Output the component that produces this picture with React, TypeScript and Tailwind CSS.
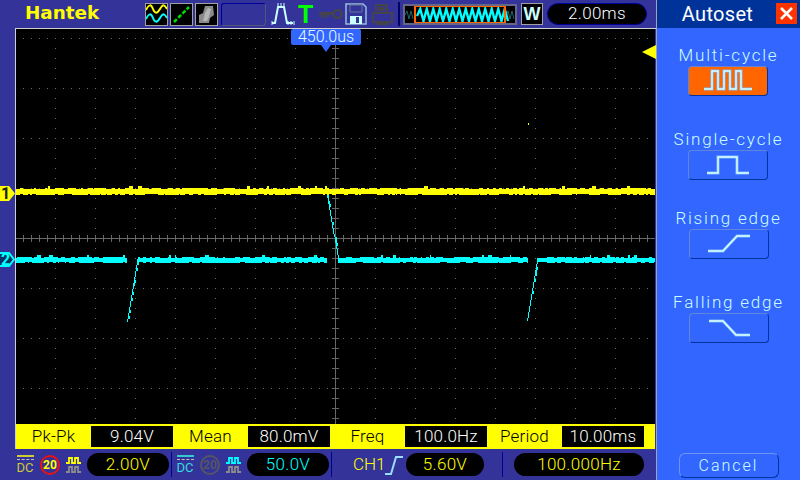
import React from 'react'

const font = { fontFamily: 'Roboto, "Liberation Sans", Arial, sans-serif' }

// small seeded random so the trace noise stays the same between runs
function makeRand(seed: number) {
  let s = seed
  return () => {
    s = (s * 16807) % 2147483647
    return s / 2147483647
  }
}

function Band({ prefix, color, top, bottom, spike, gaps, seed }: { prefix: string; color: string; top: number; bottom: number; spike: number; gaps: number[][]; seed: number }) {
  const rand = makeRand(seed)
  const rects: React.ReactNode[] = []
  let x = 0
  while (x < 639) {
    const w = 1 + Math.floor(rand() * 4)
    const a = rand()
    const b = rand()
    const t = a < 0.06 ? top - spike : a < 0.6 ? top : top + 1
    const h = (b < 0.3 ? bottom - 1 : bottom) - t
    for (let i = x; i < x + w && i < 639; i++) {
      const px = i + 16
      if (gaps.some(g => px >= g[0] && px < g[1])) continue
      rects.push(<rect key={prefix + i} x={i} y={t} width={1} height={h} fill={color} />)
    }
    x += w
  }
  return <g shapeRendering="crispEdges">{rects}</g>
}

// stepped near-vertical edge, page coords, y1 above y2
function Edge({ x1, y1, x2, y2, seed }: { x1: number; y1: number; x2: number; y2: number; seed: number }) {
  const rand = makeRand(seed)
  const rects: React.ReactNode[] = []
  for (let y = y1; y < y2; y += 3) {
    const x = Math.round(x1 + ((x2 - x1) * (y - y1)) / (y2 - y1))
    rects.push(<rect key={y} x={x - 16} y={y - 29} width={rand() < 0.35 ? 2 : 1} height={3} fill="#00ffff" />)
  }
  return <g shapeRendering="crispEdges">{rects}</g>
}

function Grid() {
  const dots: React.ReactNode[] = []
  const rows = [9, 59, 109, 159, 209, 259, 309, 359]
  for (const y of rows) {
    for (let x = 7; x < 639; x += 8) {
      dots.push(<rect key={'h' + y + '-' + x} x={x} y={y} width={1} height={1} fill="#6a6a6a" />)
    }
  }
  for (let x = 39; x < 639; x += 40) {
    for (let y = 19; y < 395; y += 10) {
      dots.push(<rect key={'v' + x + '-' + y} x={x} y={y} width={1} height={1} fill="#6a6a6a" />)
    }
  }
  const ticksH: React.ReactNode[] = []
  for (let x = 0; x < 639; x += 8) {
    ticksH.push(<rect key={'th' + x} x={x + 7} y={206} width={1} height={7} fill="#666" />)
  }
  const ticksV: React.ReactNode[] = []
  for (let y = 0; y < 395; y += 10) {
    ticksV.push(<rect key={'tv' + y} x={316} y={y + 9} width={7} height={1} fill="#666" />)
  }
  return (
    <g shapeRendering="crispEdges">
      {dots}
      <rect x={0} y={209} width={639} height={1} fill="#666" />
      <rect x={319} y={0} width={1} height={395} fill="#666" />
      {ticksH}
      {ticksV}
    </g>
  )
}

function Scope() {
  return (
    <svg width={639} height={395} className="block bg-black">
      <Grid />
      <Band prefix="y" color="#ffff00" top={159} bottom={166} spike={2} gaps={[]} seed={4711} />
      <Band prefix="c" color="#00ffff" top={228} bottom={234} spike={2} gaps={[[127, 138], [327, 338], [528, 538]]} seed={911} />
      <Edge x1={137} y1={259} x2={127} y2={322} seed={31} />
      <Edge x1={327} y1={195} x2={338} y2={256} seed={57} />
      <Edge x1={537} y1={258} x2={527} y2={320} seed={83} />
      <rect x={512} y={94} width={1} height={2} fill="#ffff00" />
    </svg>
  )
}

function IconBox({ children }: { children: React.ReactNode }) {
  return <div className="w-[23px] h-[23px] bg-black border border-[#a0a0a0] shrink-0">{children}</div>
}

function PanelBtn({ label, active, mt, children }: { label: string; active?: boolean; mt: string; children: React.ReactNode }) {
  return (
    <div className={'flex flex-col items-center ' + mt}>
      <div className="text-[17px] leading-[18px] font-light tracking-[1.8px] text-[#ccffff] whitespace-nowrap">{label}</div>
      <div
        className={
          'mt-[2px] w-[80px] h-[30px] rounded-[4px] border border-t-[#5f86d8] border-l-[#5f86d8] border-r-[#0033a0] border-b-[#0033a0] flex items-center justify-center ' +
          (active ? 'bg-[#ff6600]' : 'bg-[#3366ff]')
        }
      >
        {children}
      </div>
    </div>
  )
}

function Wave({ d }: { d: string }) {
  return (
    <svg width={50} height={24} fill="none">
      <path d={d} stroke="#77bbff" strokeWidth={3} />
      <path d={d} stroke="#e0ffff" strokeWidth={1.4} />
    </svg>
  )
}

function Pill({ w, color, children }: { w: string; color: string; children: React.ReactNode }) {
  return (
    <div className={w + ' h-[23px] rounded-full bg-black flex items-center justify-center text-[17px] tracking-[0.3px] font-light shrink-0 ' + color}>
      {children}
    </div>
  )
}

function Measure({ label, value }: { label: string; value: string }) {
  return (
    <>
      <div className="w-[75px] text-center text-black text-[17px] tracking-[0.2px] font-light shrink-0">{label}</div>
      <div className="w-[82px] h-[21px] bg-black text-white text-[17px] tracking-[0.2px] font-light flex items-center justify-center shrink-0">{value}</div>
    </>
  )
}

function DcIcon({ color, text }: { color: string; text: string }) {
  return (
    <div className="w-[18px] flex flex-col items-center shrink-0">
      <div className={'w-[17px] h-[2px] ' + color} />
      <div className="w-[17px] h-[3px] mt-[2px] border-t border-dashed border-[#c0c0c0]" />
      <div className={'text-[13px] leading-[12px] ' + text}>DC</div>
    </div>
  )
}

function CoupleWave({ color }: { color: string }) {
  return (
    <svg width={18} height={18} fill="none" className="shrink-0">
      <path d="M1 7h3V2h3v5h3V2h3v5h3" stroke={color} strokeWidth={1.8} />
      <path d="M1 16h3v-5h3v5h3v-5h3v5h3" stroke="#8c8c8c" strokeWidth={1.8} />
    </svg>
  )
}

// time base strip wave
function stripWave() {
  let d = 'M12 10'
  let x = 12
  let up = true
  while (x < 100) {
    x += 3.25
    d += 'L' + x + ' ' + (up ? 3 : 15)
    up = !up
  }
  return d
}

export default function App() {
  return (
    <div className="w-[800px] h-[480px] flex bg-[#333399] overflow-hidden" style={font}>
      <div className="w-[656px] flex flex-col shrink-0">
        {/* top bar */}
        <div className="h-[28px] flex items-center pl-[25px] shrink-0">
          <div className="w-[120px] text-[#ffff00] text-[17px] font-bold shrink-0 scale-x-[1.08] origin-left" style={{ fontFamily: '"DejaVu Sans", sans-serif' }}>Hantek</div>
          <div className="flex gap-[2px] shrink-0">
            <IconBox>
              <svg width={21} height={21} fill="none">
                <path d="M0 6c3-6 5-6 7-1s4 5 7 0 4-5 7 0" stroke="#ffff00" strokeWidth={2} />
                <path d="M0 15c3-6 5-6 7-1s4 5 7 0 4-5 7 0" stroke="#00ffff" strokeWidth={2} />
              </svg>
            </IconBox>
            <IconBox>
              <svg width={21} height={21} fill="none">
                <path d="M3 18L18 3" stroke="#00dd00" strokeWidth={2.5} strokeDasharray="4 2" />
              </svg>
            </IconBox>
            <IconBox>
              <svg width={21} height={21}>
                <path d="M3 19V11l4-2 2-7h8l1 9-4 3-1 5z" fill="#8a8a8a" />
                <path d="M7 17l2-8 3-5 3 1-2 8-2 4z" fill="#b5b5b5" />
              </svg>
            </IconBox>
          </div>
          <div className="ml-[3px] w-[45px] h-[23px] rounded-[3px] border border-t-[#000099] border-l-[#000099] border-r-[#555577] border-b-[#555577] shrink-0" />
          <svg width={24} height={24} fill="none" className="ml-[5px] shrink-0">
            <path d="M1 21h3L7 5h6l3 16h6" stroke="#ccffff" strokeWidth={2} />
            <path d="M7 4v-3M10 4v-3M13 4v-3M1 23v-4M17 23v-4M20 23v-4M23 23v-4" stroke="#ccffff" strokeWidth={1} />
          </svg>
          <div className="ml-[3px] w-[15px] text-[#00ff00] text-[25px] font-bold leading-none shrink-0 text-center" style={{ fontFamily: '"Liberation Sans", sans-serif' }}>T</div>
          <svg width={24} height={12} fill="none" className="ml-[6px] shrink-0">
            <circle cx={18.5} cy={6} r={4} stroke="#44444a" strokeWidth={2.5} />
            <path d="M0 5.5h15" stroke="#44444a" strokeWidth={3} />
            <path d="M3 6v4M6 6v4M9 6v3" stroke="#44444a" strokeWidth={2} />
          </svg>
          <svg width={22} height={22} fill="none" className="ml-[2px] shrink-0">
            <path d="M1 1h17l3 3v17H1z" stroke="#99bbdd" strokeWidth={1.5} />
            <path d="M5 2h12v7H5z" stroke="#667799" />
            <rect x={5} y={13} width={12} height={8} fill="#ccffff" />
            <rect x={11} y={14} width={3} height={6} fill="#333399" />
          </svg>
          <svg width={21} height={21} fill="none" className="ml-[5px] shrink-0">
            <path d="M4 1h11v8H4zM1 9h19v9H1zM5 18h11v2H5zM6 4h7M6 6h7" stroke="#44444a" strokeWidth={2} />
          </svg>
          <div className="ml-[5px] w-[2px] h-[24px] bg-[#000066] shrink-0" />
          {/* time base window */}
          <div className="ml-[3px] w-[114px] h-[21px] bg-black border-2 border-[#666688] shrink-0">
            <svg width={110} height={17} fill="none" className="block">
              <path d="M0 9l2-4 2 8 2-8 2 8" stroke="#226666" />
              <path d="M101 9l2-4 2 8 2-8 2 8" stroke="#226666" />
              <path d={stripWave()} stroke="#00ffff" strokeWidth={2.4} />
              <rect x={10} y={0} width={90} height={17} stroke="#ff6600" strokeWidth={2} />
            </svg>
          </div>
          <div className="ml-[4px] w-[22px] h-[22px] bg-black border border-[#a0a0a0] text-[#ccffff] text-[18px] font-bold flex items-center justify-center shrink-0" style={{ fontFamily: '"Liberation Sans", sans-serif' }}>W</div>
          <div className="ml-[4px] w-[100px] h-[22px] rounded-full bg-black border border-[#000099] text-white text-[17px] tracking-[0.3px] font-light flex items-center justify-center shrink-0">2.00ms</div>
        </div>

        {/* plot */}
        <div className="relative flex-1 flex flex-col pl-[15px]">
          <div className="border-t border-l border-[#d0d0d0]">
            <Scope />
          </div>
          <div className="w-[640px] h-[25px] bg-[#ffff00] border-l border-[#d0d0d0] flex items-center shrink-0">
            <Measure label="Pk-Pk" value="9.04V" />
            <Measure label="Mean" value="80.0mV" />
            <Measure label="Freq" value="100.0Hz" />
            <Measure label="Period" value="10.00ms" />
          </div>

          {/* trigger position badge */}
          <div className="absolute left-[291px] top-[1px] w-[70px] h-[16px] rounded-[2px] bg-[#3366ff] text-[#e8ffff] text-[16px] leading-[16px] text-center font-light">450.0us</div>
          <svg width={10} height={7} className="absolute left-[321px] top-[17px]">
            <path d="M0 0h10L5 7z" fill="#3366ff" />
          </svg>
          {/* trigger level */}
          <svg width={14} height={14} className="absolute left-[642px] top-[17px]">
            <path d="M14 0v14L0 7z" fill="#ffff00" />
          </svg>
          {/* channel markers */}
          <div className="absolute left-0 top-[158px]">
            <svg width={16} height={15} className="block">
              <path d="M0 0h9l6 7.5-6 7.5H0z" fill="#ffff00" />
            </svg>
            <span className="absolute left-0 top-0 w-[11px] text-center text-[16px] leading-[15px] font-bold text-[#222200]">1</span>
          </div>
          <div className="absolute left-0 top-[224px]">
            <svg width={16} height={15} className="block">
              <path d="M0 1h9l5 6.5-5 6.5H0" fill="#003366" stroke="#00ffff" strokeWidth={2} />
            </svg>
            <span className="absolute left-0 top-0 w-[11px] text-center text-[16px] leading-[15px] font-bold text-[#00ffff]">2</span>
          </div>
        </div>

        {/* bottom status bar */}
        <div className="h-[31px] flex items-center pl-[16px] shrink-0">
          <DcIcon color="bg-[#cccc33]" text="text-[#cccc33]" />
          <div className="ml-[6px] w-[20px] h-[20px] rounded-full border-2 border-[#ee1111] text-[#ffff00] text-[12px] font-bold flex items-center justify-center shrink-0">20</div>
          <div className="ml-[5px]"><CoupleWave color="#ffff00" /></div>
          <div className="ml-[4px]"><Pill w="w-[82px]" color="text-[#ffff00]">2.00V</Pill></div>
          <div className="ml-[2px] w-[1px] h-[25px] bg-[#000099] shrink-0" />
          <div className="ml-[4px]"><DcIcon color="bg-[#33cccc]" text="text-[#33dddd]" /></div>
          <div className="ml-[6px] w-[20px] h-[20px] rounded-full border-2 border-[#555566] text-[#555566] text-[12px] font-bold flex items-center justify-center shrink-0">20</div>
          <div className="ml-[5px]"><CoupleWave color="#00ffff" /></div>
          <div className="ml-[4px]"><Pill w="w-[82px]" color="text-[#00ffff]">50.0V</Pill></div>
          <div className="ml-[2px] w-[1px] h-[25px] bg-[#000099] shrink-0" />
          <div className="ml-[21px] w-[28px] text-[#ffff00] text-[17px] font-light shrink-0">CH1</div>
          <svg width={20} height={20} fill="none" className="ml-[3px] shrink-0">
            <path d="M1 19h6l5-17h7" stroke="#99ddff" strokeWidth={2} />
          </svg>
          <div className="ml-[2px]"><Pill w="w-[78px]" color="text-[#ffff00]">5.60V</Pill></div>
          <div className="ml-[18px] w-[1px] h-[25px] bg-[#000099] shrink-0" />
          <div className="ml-[11px]"><Pill w="w-[130px]" color="text-[#ffff00]">100.000Hz</Pill></div>
        </div>
      </div>

      {/* right menu */}
      <div className="w-[144px] flex flex-col bg-[#3366ff] border-l border-[#a0a0c0] shrink-0">
        <div className="h-[28px] bg-[#003399] relative flex items-center justify-center shrink-0 pr-[22px]">
          <span className="text-white text-[20px] tracking-[0.3px]">Autoset</span>
          <div className="absolute right-[3px] top-[3px] w-[21px] h-[21px] bg-[#ff3300] flex items-center justify-center">
            <svg width={15} height={15} fill="none">
              <path d="M2 2l11 11M13 2L2 13" stroke="#fff" strokeWidth={2.5} />
            </svg>
          </div>
        </div>
        <div className="flex flex-col items-center">
          <PanelBtn label="Multi-cycle" active mt="mt-[18px]">
            <Wave d="M1 20H9V2H15V20H21V2H27V20H33V2H38V20H49" />
          </PanelBtn>
          <PanelBtn label="Single-cycle" mt="mt-[34px]">
            <Wave d="M4 20H15V4H34V20H46" />
          </PanelBtn>
          <PanelBtn label="Rising edge" mt="mt-[29px]">
            <Wave d="M4 19H19L33 4H46" />
          </PanelBtn>
          <PanelBtn label="Falling edge" mt="mt-[34px]">
            <Wave d="M5 5H19L32 19H46" />
          </PanelBtn>
        </div>
        <div className="flex-1" />
        <div className="flex justify-center mb-[2px]">
          <div className="w-[100px] h-[25px] rounded-[6px] border border-t-[#6a95f0] border-l-[#6a95f0] border-r-[#0033a0] border-b-[#0033a0] text-[#ccffff] text-[16px] tracking-[2px] font-light flex items-center justify-center">Cancel</div>
        </div>
      </div>
    </div>
  )
}
